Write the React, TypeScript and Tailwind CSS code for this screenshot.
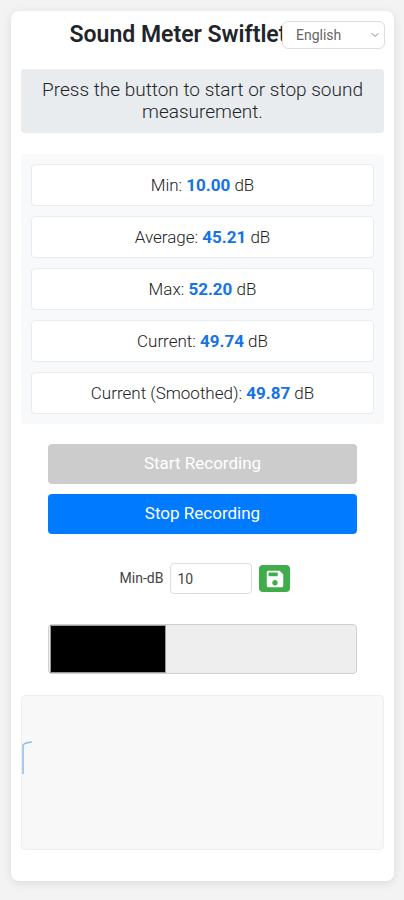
import { useState } from 'react';
import { ChevronDown } from 'lucide-react';
import { MdSave } from 'react-icons/md';

const stats = [
  { label: 'Min', value: 10.0 },
  { label: 'Average', value: 45.21 },
  { label: 'Max', value: 52.2 },
  { label: 'Current', value: 49.74 },
  { label: 'Current (Smoothed)', value: 49.87 },
];

const languages = ['English', 'Deutsch', 'Español'];

const meterPercent = 38;

export default function App() {
  const [recording, setRecording] = useState(true);
  const [minDb, setMinDb] = useState('10');

  return (
    <div className="min-h-screen bg-[#f3f3f3] pt-[11px] pr-[10px] pb-[11px] pl-[11px] font-['Roboto',sans-serif] text-[#222222]">
      <main className="relative flex flex-col rounded-lg bg-white px-[10px] pt-[10px] pb-[31px] shadow-[0_2px_10px_rgba(0,0,0,0.1)]">
        <h1 className="pr-[49px] text-center text-[23px] leading-[28px] font-semibold whitespace-nowrap text-[#212529]">
          Sound Meter Swiftlet
        </h1>
        <div className="absolute top-[10px] right-[9px] w-[103px]">
          <select
            aria-label="Language"
            className="h-[28px] w-full appearance-none rounded-md border border-[#dddddd] bg-white pl-[13px] text-[14px] leading-[20px] text-[#666666]"
          >
            {languages.map((name) => (
              <option key={name}>{name}</option>
            ))}
          </select>
          <ChevronDown
            size={12}
            strokeWidth={2}
            className="pointer-events-none absolute top-[8px] right-[4px] text-[#888888]"
          />
        </div>

        <p className="mt-[20px] rounded-sm bg-[#e9ecef] px-[10px] py-[10px] text-center text-[19px] leading-[22px] font-light text-[#212529]">
          Press the button to start or stop sound measurement.
        </p>

        <ul className="mt-[21px] flex flex-col gap-[10px] rounded-sm bg-[#f8f9fa] p-[10px]">
          {stats.map(({ label, value }) => (
            <li
              key={label}
              className="rounded-sm border border-[#e9ecef] bg-white py-[10px] text-center text-[17px] leading-[20px] font-light"
            >
              {label}: <strong className="font-bold text-[#1473e6]">{value.toFixed(2)}</strong> dB
            </li>
          ))}
        </ul>

        <div className="mx-auto mt-[20px] flex w-[85%] flex-col gap-[10px]">
          <button
            disabled={recording}
            onClick={() => setRecording(true)}
            className="h-[40px] rounded-sm bg-[#007bff] text-[17px] text-white disabled:bg-[#cccccc]"
          >
            Start Recording
          </button>
          <button
            disabled={!recording}
            onClick={() => setRecording(false)}
            className="h-[40px] rounded-sm bg-[#007bff] text-[17px] text-white disabled:bg-[#cccccc]"
          >
            Stop Recording
          </button>
        </div>

        <div className="mt-[29px] flex items-center justify-center gap-[7px] pl-[5px] text-[#444444]">
          <label htmlFor="min-db" className="text-[14px]">
            Min-dB
          </label>
          <input
            id="min-db"
            type="text"
            inputMode="numeric"
            value={minDb}
            onChange={(e) => setMinDb(e.target.value)}
            className="h-[31px] w-[82px] rounded-sm border border-[#dddddd] px-[6px] text-[14px]"
          />
          <button
            aria-label="Save"
            className="flex h-[27px] w-[31px] items-center justify-center rounded-sm bg-[#3fae4a] text-white"
          >
            <MdSave size={22} />
          </button>
        </div>

        <div className="mx-auto mt-[30px] h-[50px] w-[85%] overflow-hidden rounded-sm border border-[#d0d0d0] bg-[#eeeeee] pl-px">
          <div className="h-full border border-[#999999] bg-black" style={{ width: `${meterPercent}%` }} />
        </div>

        <div className="mt-[21px] h-[155px] rounded-sm border border-[#eeeeee] bg-[#f8f8f8]">
          <svg width="12" height="80" fill="none" className="block">
            <path d="M1 78V49L4 47L10 46" stroke="#8db9ee" strokeWidth="1.5" />
          </svg>
        </div>
      </main>
    </div>
  );
}
